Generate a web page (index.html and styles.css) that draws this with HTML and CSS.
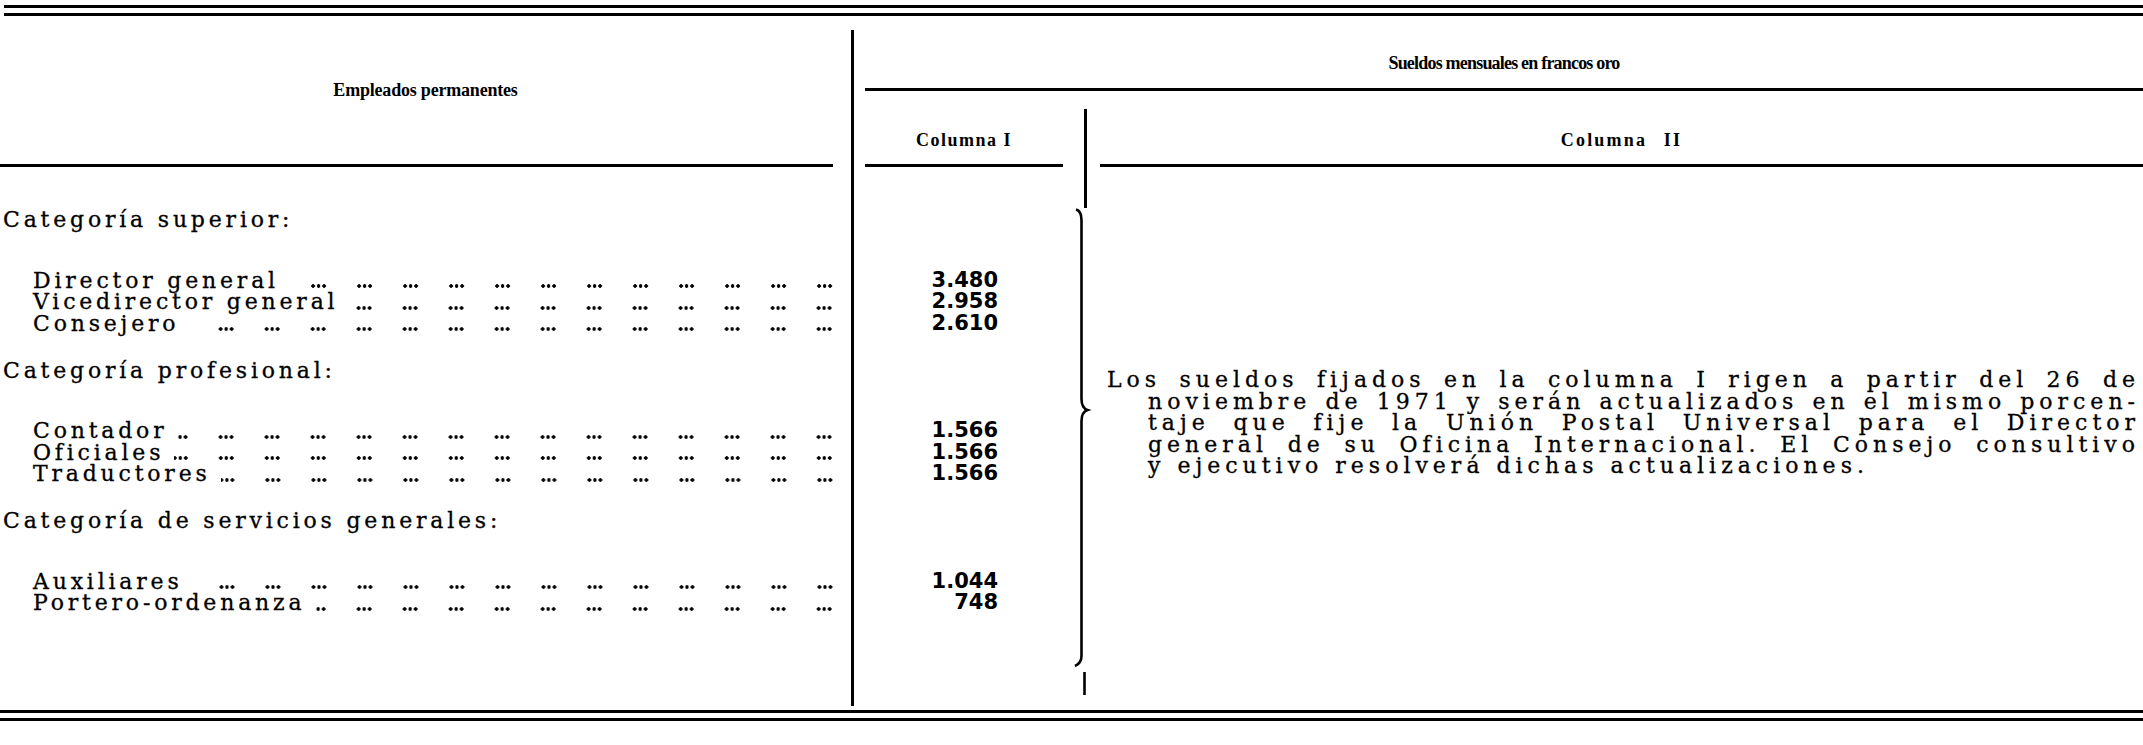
FILE: index.html
```html
<!DOCTYPE html>
<html lang="es">
<head>
<meta charset="utf-8">
<title>Sueldos mensuales en francos oro</title>
<link rel="stylesheet" href="styles.css">
</head>
<body>
<div class="page">
  <div class="rules-top"></div>

  <div class="head">
    <div class="head-left">
      <div class="head-title t-emp">Empleados permanentes</div>
      <div class="rule rule-left"></div>
    </div>
    <div class="head-right">
      <div class="super t-sue">Sueldos mensuales en francos oro</div>
      <div class="subrow">
        <div class="sub t-col">Columna I</div>
        <div class="sub-div"><span class="vline"></span></div>
        <div class="sub t-col t-col2">Columna II</div>
      </div>
    </div>
  </div>

  <div class="body">
    <div class="labels">
      <div class="group">
        <div class="cat">Categoría superior:</div>
        <div class="item"><span class="name">Director general</span><span class="lead"></span></div>
        <div class="item"><span class="name">Vicedirector general</span><span class="lead"></span></div>
        <div class="item"><span class="name">Consejero</span><span class="lead"></span></div>
      </div>
      <div class="group">
        <div class="cat">Categoría profesional:</div>
        <div class="item"><span class="name">Contador</span><span class="lead"></span></div>
        <div class="item"><span class="name">Oficiales</span><span class="lead"></span></div>
        <div class="item"><span class="name">Traductores</span><span class="lead"></span></div>
      </div>
      <div class="group">
        <div class="cat">Categoría de servicios generales:</div>
        <div class="item"><span class="name">Auxiliares</span><span class="lead"></span></div>
        <div class="item"><span class="name">Portero-ordenanza</span><span class="lead"></span></div>
      </div>
    </div>

    <div class="values">
      <div class="group">
        <div class="cat"></div>
        <div class="num">3.480</div>
        <div class="num">2.958</div>
        <div class="num">2.610</div>
      </div>
      <div class="group">
        <div class="cat"></div>
        <div class="num">1.566</div>
        <div class="num">1.566</div>
        <div class="num">1.566</div>
      </div>
      <div class="group">
        <div class="cat"></div>
        <div class="num">1.044</div>
        <div class="num">748</div>
      </div>
    </div>

    <div class="divider">
      <svg class="brace" width="28" height="539" viewBox="0 0 28 539" aria-hidden="true">
        <path d="M13.5 0 V41" stroke="#000" stroke-width="3" fill="none"/>
        <path d="M4 42.5 C8 43.5 9.5 47 9.5 53 V232 C9.5 238 11 241.5 15.5 243 C11 244.5 9.5 248 9.5 254 V489 C9.5 494 7.5 497 3 499" stroke="#000" stroke-width="2.6" fill="none"/>
        <path d="M12.5 505 V528" stroke="#000" stroke-width="2.6" fill="none"/>
      </svg>
    </div>

    <div class="note">
      <span class="note-line first">Los sueldos fijados en la columna I rigen a partir del 26 de</span>
      <span class="note-line">noviembre de 1971 y serán actualizados en el mismo porcen-</span>
      <span class="note-line">taje que fije la Unión Postal Universal para el Director</span>
      <span class="note-line">general de su Oficina Internacional. El Consejo consultivo</span>
      <span class="note-line last">y ejecutivo resolverá dichas actualizaciones.</span>
    </div>
  </div>

  <div class="rules-bottom"></div>
</div>
</body>
</html>
```
FILE: styles.css
```css
html, body {
  margin: 0;
  padding: 0;
  background: #fff;
}

.page {
  width: 2143px;
  height: 745px;
  color: #000;
  font-family: "DejaVu Serif", "Liberation Serif", serif;
  overflow: hidden;
}

/* double rules */
.rules-top {
  margin: 5px 0 0 4px;
  height: 5px;
  border-top: 3px solid #000;
  border-bottom: 3px solid #000;
}

.rules-bottom {
  margin-top: 4px;
  height: 5px;
  border-top: 3px solid #000;
  border-bottom: 3px solid #000;
}

/* ---------- header ---------- */
.head {
  margin-top: 14px;
  display: grid;
  grid-template-columns: 854px 1fr;
  height: 137px;
  font-family: "Liberation Serif", "DejaVu Serif", serif;
  font-weight: 700;
  font-size: 18px;
}

.t-emp {
  letter-spacing: -0.2px;
}

.t-sue {
  letter-spacing: -0.8px;
}

.t-col {
  letter-spacing: 1.5px;
}

.t-col2 {
  letter-spacing: 2.2px;
  word-spacing: 10px;
}

.head-left {
  border-right: 3px solid #000;
  display: flex;
  flex-direction: column;
}

.head-title {
  flex: 1;
  display: flex;
  align-items: center;
  justify-content: center;
  padding-bottom: 14px;
}

.rule {
  height: 3px;
  background: #000;
}

.rule-left {
  margin-right: 18px;
}

.head-right {
  padding-left: 11px;
  display: flex;
  flex-direction: column;
}

.super {
  padding-top: 8px;
  height: 50px;
  line-height: 50px;
  text-align: center;
  border-bottom: 3px solid #000;
}

.subrow {
  flex: 1;
  display: grid;
  grid-template-columns: 198px 37px 1fr;
}

.sub {
  padding-top: 25px;
  line-height: 48px;
  text-align: center;
  border-bottom: 3px solid #000;
}

.sub-div {
  display: flex;
}

.vline {
  display: block;
  width: 3px;
  margin: 18px 0 0 21px;
  background: #000;
  flex: none;
}

/* ---------- body ---------- */
.body {
  display: grid;
  grid-template-columns: 854px 218px 28px 1fr;
  height: 539px;
}

.labels,
.values {
  padding-top: 42.25px;
  line-height: 21.5px;
}

.labels {
  border-right: 3px solid #000;
  padding-right: 18px;
  font-size: 22px;
  letter-spacing: 3.8px;
  -webkit-text-stroke: 0.3px #000;
}

.group {
  margin-bottom: 25.5px;
}

.cat {
  height: 21.5px;
  margin-bottom: 39px;
  padding-left: 3px;
  white-space: nowrap;
}

.item {
  height: 21.5px;
  display: flex;
  padding-left: 33px;
}

.name {
  flex: none;
  white-space: nowrap;
}

/* dot leaders: groups of three dots, right-aligned to the column rule */
.lead {
  flex: 1 1 0;
  min-width: 0;
  align-self: flex-end;
  height: 4px;
  margin: 0 0 3px 10px;
  background:
    radial-gradient(circle at 32px 2px, #000 1.5px, rgba(0, 0, 0, 0) 2.1px) right bottom / 46px 4px repeat-x,
    radial-gradient(circle at 37.5px 2px, #000 1.5px, rgba(0, 0, 0, 0) 2.1px) right bottom / 46px 4px repeat-x,
    radial-gradient(circle at 43px 2px, #000 1.5px, rgba(0, 0, 0, 0) 2.1px) right bottom / 46px 4px repeat-x;
}

.num {
  height: 21.5px;
  text-align: right;
  padding-right: 74px;
  font-family: "DejaVu Sans", "Liberation Sans", sans-serif;
  font-weight: 700;
  font-size: 21px;
}

.divider {
  display: flex;
}

.brace {
  display: block;
}

.note {
  display: flex;
  flex-direction: column;
  justify-content: center;
  padding: 0 3px 27px 48px;
  font-size: 22px;
  line-height: 21.5px;
  letter-spacing: 5px;
  -webkit-text-stroke: 0.3px #000;
}

.note-line {
  display: block;
  white-space: nowrap;
  text-align: justify;
  text-align-last: justify;
}

.note-line.first {
  margin-left: -41px;
}

.note-line.last {
  text-align-last: left;
}
```
